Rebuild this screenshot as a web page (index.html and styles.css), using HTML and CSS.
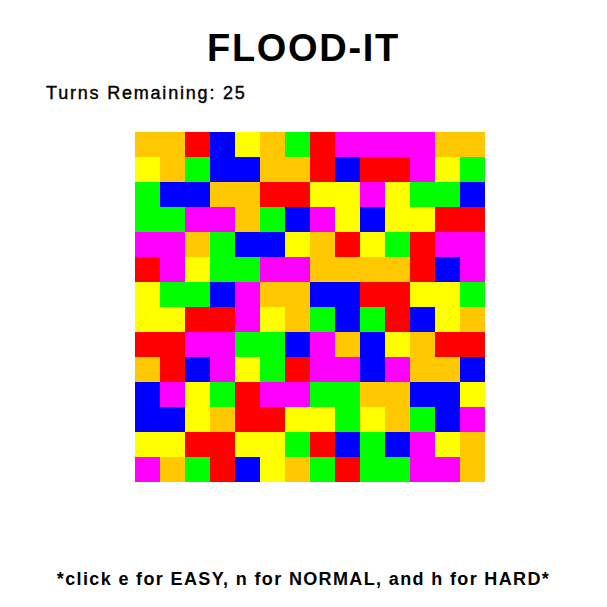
FILE: index.html
```html
<!DOCTYPE html>
<html lang="en">
<head>
  <meta charset="UTF-8" />
  <meta name="viewport" content="width=device-width, initial-scale=1.0"/>
  <title>FLOOD-IT</title>
  <link rel="stylesheet" href="styles.css">
</head>
<body>
  <h1 class="title">FLOOD-IT</h1>
  <p class="turns">Turns Remaining: <span id="turns">25</span></p>

  <div id="board" class="board"></div>

  <p class="help">*click e for EASY, n for NORMAL, and h for HARD*</p>

  <script>
    // O orange, R red, B blue, Y yellow, G green, M magenta
    const rows = [
      "OORBYOGRMMMMOO",
      "YOGBBOORBRRMYG",
      "GBBOORRYYMYGGB",
      "GGMMOGBMYBYYRR",
      "MMOGBBYORYGRMM",
      "RMYGGMMOOOORBM",
      "YGGBMOOBBRRYYG",
      "YYRRMYOGBGRBYO",
      "RRMMGGBMOBYORR",
      "ORBMYGRMMBMOOB",
      "BMYGRMMGGOOBBY",
      "BBYORRYYGYOGBM",
      "YYRRYYGRBGBMYO",
      "MOGRBYOGRGGMMO"
    ];

    const board = document.getElementById("board");
    rows.forEach(row => {
      for (const c of row) {
        const cell = document.createElement("div");
        cell.className = "cell c-" + c;
        board.appendChild(cell);
      }
    });
  </script>
</body>
</html>
```

FILE: styles.css
```css
body {
  margin: 0;
  background-color: white;
  color: black;
  font-family: "Liberation Sans", Arial, sans-serif;
}
.title {
  margin: 26px 0 0;
  font-size: 38px;
  line-height: 44px;
  font-weight: bold;
  letter-spacing: 1.7px;
  text-align: center;
}
.turns {
  margin: 13px 0 0;
  padding-left: 46px;
  font-size: 18px;
  line-height: 21px;
  letter-spacing: 1.8px;
  -webkit-text-stroke: 0.4px black;
}
.board {
  display: grid;
  grid-template-columns: repeat(14, 25px);
  grid-auto-rows: 25px;
  width: 350px;
  margin: 28px 0 0 135px;
}
.help {
  margin: 87px 0 0;
  font-size: 18px;
  line-height: 21px;
  font-weight: bold;
  letter-spacing: 1.36px;
  text-align: center;
}
.c-O { background-color: #ffc800; }
.c-R { background-color: #ff0000; }
.c-B { background-color: #0000ff; }
.c-Y { background-color: #ffff00; }
.c-G { background-color: #00ff00; }
.c-M { background-color: #ff00ff; }
```
